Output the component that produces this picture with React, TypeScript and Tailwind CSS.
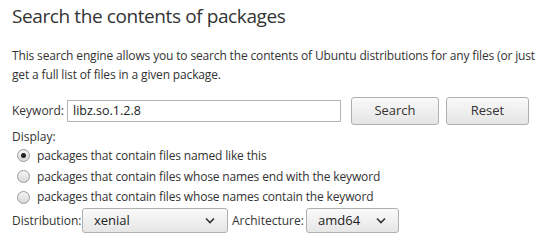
import React from "react";

function Radio({ checked }: { checked?: boolean }) {
  return (
    <span className="relative inline-flex h-[13px] w-[13px] shrink-0 items-center justify-center rounded-full border border-[#9a9a9a] bg-gradient-to-b from-[#f4f4f4] to-[#d8d8d8]">
      {checked && <span className="h-[5px] w-[5px] rounded-full bg-[#222]" />}
    </span>
  );
}

function Chevron() {
  return (
    <svg width="10" height="7" viewBox="0 0 10 7" className="shrink-0">
      <path d="M1 1.5 L5 5.5 L9 1.5" fill="none" stroke="#333" strokeWidth="1.6" />
    </svg>
  );
}

export default function App() {
  return (
    <div className="h-[242px] w-[540px] overflow-hidden bg-white pl-[12px] text-[#333]" style={{ fontFamily: "'Open Sans', 'Noto Sans', sans-serif" }}>
      <h1 className="pt-[3px] text-[19px] leading-[26px] tracking-[-0.4px] text-[#333]">Search the contents of packages</h1>
      <p className="mt-[18px] w-[530px] text-[12px] leading-[18.5px] tracking-[-0.15px]">
        This search engine allows you to search the contents of Ubuntu distributions for any files (or just get a full list of files in a given package.
      </p>
      <div className="mt-[13px] flex items-center text-[12px]">
        <span className="w-[55px]">Keyword:</span>
        <div className="flex h-[22px] w-[274px] items-center border border-[#b5b5b5] bg-white pl-[5px] text-[12.5px] text-[#222]">libz.so.1.2.8</div>
        <button className="ml-[10px] h-[28px] w-[88px] rounded-[3px] border border-[#b0b0b0] bg-gradient-to-b from-[#fafafa] to-[#e4e4e4] text-[13px] text-[#333]">Search</button>
        <button className="ml-[7px] h-[28px] w-[83px] rounded-[3px] border border-[#b0b0b0] bg-gradient-to-b from-[#fafafa] to-[#e4e4e4] text-[13px] text-[#333]">Reset</button>
      </div>
      <div className="mt-[4px] text-[12px] leading-[16px]">Display:</div>
      <div className="text-[12px] tracking-[-0.15px]">
        <div className="flex h-[21px] items-center pl-[5px]">
          <Radio checked />
          <span className="ml-[7px]">packages that contain files named like this</span>
        </div>
        <div className="flex h-[21px] items-center pl-[5px]">
          <Radio />
          <span className="ml-[7px]">packages that contain files whose names end with the keyword</span>
        </div>
        <div className="flex h-[20px] items-center pl-[5px]">
          <Radio />
          <span className="ml-[7px]">packages that contain files whose names contain the keyword</span>
        </div>
      </div>
      <div className="mt-[1px] flex items-center text-[12px]">
        <span className="w-[70px]">Distribution:</span>
        <div className="flex h-[25px] w-[146px] items-center justify-between rounded-[3px] border border-[#b0b0b0] bg-gradient-to-b from-[#fafafa] to-[#e6e6e6] pl-[11px] pr-[12px] text-[13px] text-[#222]">
          <span>xenial</span>
          <Chevron />
        </div>
        <span className="ml-[4px] w-[74px]">Architecture:</span>
        <div className="flex h-[25px] w-[93px] items-center justify-between rounded-[3px] border border-[#b0b0b0] bg-gradient-to-b from-[#fafafa] to-[#e6e6e6] pl-[11px] pr-[12px] text-[13px] text-[#222]">
          <span>amd64</span>
          <Chevron />
        </div>
      </div>
    </div>
  );
}
